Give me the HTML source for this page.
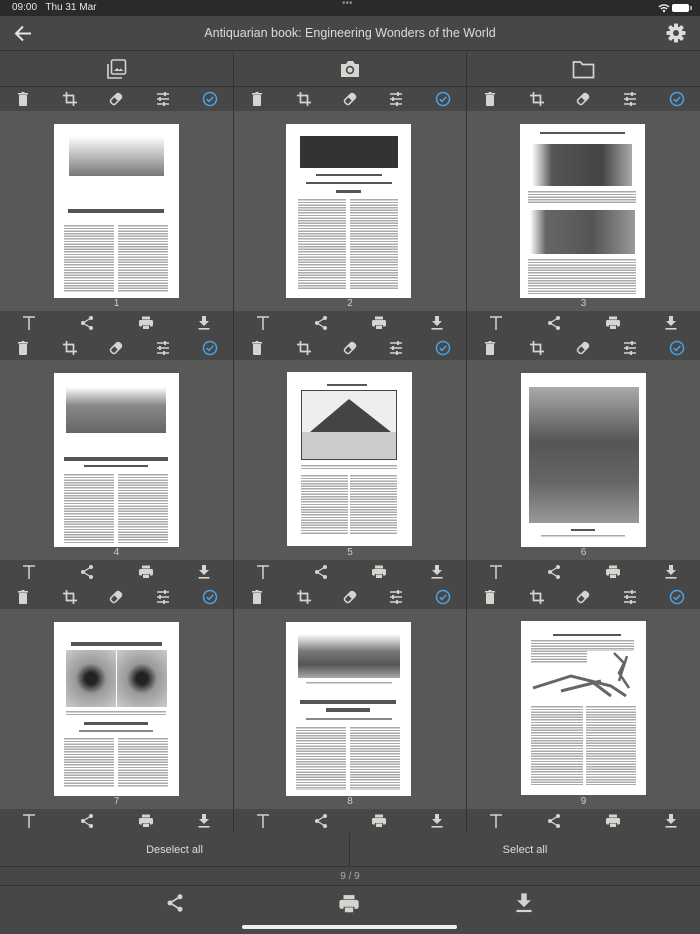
<!DOCTYPE html>
<html><head><meta charset="utf-8"><style>
*{margin:0;padding:0;box-sizing:border-box}
body{width:700px;height:934px;background:#474747;font-family:"Liberation Sans",sans-serif;position:relative;overflow:hidden;color:#d6d4cf}
.abs{position:absolute}
.sb{left:0;top:0;width:700px;height:16px;background:#2a2a2a;font-size:10px;color:#e8e8e8}
.tb{left:0;top:16px;width:700px;height:35px;background:#474747;border-bottom:1px solid #333}
.tabs{left:0;top:52px;width:700px;height:35px;background:#474747;border-bottom:1px solid #333}
.vl{width:1px;background:#333}
.bar{display:flex;justify-content:space-around;align-items:center;height:24px;background:#474747}
.area{height:200px;background:#585858;position:relative}
.cell{position:absolute;width:233px;height:248px;border-bottom:1px solid #333}
.pg{position:absolute;left:54px;top:13px;width:125px;height:174px;background:#fff;overflow:hidden}
.num{position:absolute;left:0;width:100%;top:187px;text-align:center;font-size:10px;color:#ccc}
.pg div{position:absolute}
.im{background:#777}
.tx{background:repeating-linear-gradient(#fff 0 1.2px,#aaa 1.2px 2.6px)}
.hd{background:#555;height:3px}
svg{display:block}
</style></head><body>
<svg width="0" height="0" style="position:absolute">
<defs>
<g id="trash"><rect x="4" y="4" width="8" height="11" rx="1" fill="#d6d4cf"/><rect x="3" y="2" width="10" height="1.6" fill="#d6d4cf"/><rect x="6.5" y="1" width="3" height="1.5" fill="#d6d4cf"/></g>
<g id="crop" fill="none" stroke="#d6d4cf" stroke-width="1.7"><path d="M4.5 1v10.5H15M1 4.5h10.5V15"/></g>
<g id="eras"><g transform="rotate(-45 8 8)"><rect x="2" y="5" width="12" height="6" rx="2" fill="none" stroke="#d6d4cf" stroke-width="1.5"/><rect x="8" y="5" width="6" height="6" rx="1.5" fill="#d6d4cf"/></g></g>
<g id="sld" stroke="#d6d4cf" stroke-width="1.6"><path d="M2 3h12M2 8h12M2 13h12"/><path d="M10 1v4M5 6v4M9 11v4" stroke-width="1.8"/></g>
<g id="chk" fill="none" stroke="#4aa3e3" stroke-width="1.5"><circle cx="8" cy="8" r="6.5"/><path d="M4.8 8.2l2.2 2.2 4.3-4.5"/></g>
<g id="T" stroke="#d6d4cf" stroke-width="1.5" fill="none"><path d="M2 2h12M8 2v13"/></g>
<g id="shr" fill="#d6d4cf"><circle cx="12" cy="3" r="2"/><circle cx="4" cy="8" r="2"/><circle cx="12" cy="13" r="2"/><path d="M12 3L4 8l8 5" stroke="#d6d4cf" stroke-width="1.3" fill="none"/></g>
<g id="prn" fill="#d6d4cf"><rect x="4" y="1.5" width="8" height="3"/><rect x="1" y="5" width="14" height="6.5" rx="1.5"/><rect x="4" y="10" width="8" height="4.5" fill="#474747"/><rect x="5" y="10.5" width="6" height="3.5"/></g>
<g id="dl" fill="#d6d4cf"><path d="M6 1h4v5h3l-5 5-5-5h3z"/><rect x="2.5" y="13" width="11" height="1.6"/></g>
</defs></svg>

<div class="abs sb"><span class="abs" style="left:12px;top:2px">09:00&nbsp;&nbsp;&nbsp;Thu 31 Mar</span>
<span class="abs" style="left:342px;top:-2px;color:#888;font-size:10px">•••</span>
<svg class="abs" style="left:658px;top:3px" width="12" height="10"><path d="M1 4a7 7 0 0 1 10 0M3 6a4 4 0 0 1 6 0" stroke="#eee" stroke-width="1.4" fill="none"/><circle cx="6" cy="8" r="1.2" fill="#eee"/></svg>
<div class="abs" style="left:672px;top:4px;width:17px;height:8px;border-radius:2px;background:#fff"></div><div class="abs" style="left:690px;top:6px;width:1.5px;height:4px;background:#aaa"></div></div>

<div class="abs tb">
<svg class="abs" style="left:14px;top:9px" width="18" height="17"><path d="M17 8.5H2M9 1.5L2 8.5l7 7" stroke="#e4e4e4" stroke-width="2" fill="none"/></svg>
<div class="abs" style="left:0;width:700px;top:10px;text-align:center;font-size:12.5px;color:#dcdcdc">Antiquarian book: Engineering Wonders of the World</div>
<svg class="abs" style="left:666px;top:7px" width="20" height="20" viewBox="0 0 20 20"><g fill="#dcdcdc"><circle cx="10" cy="10" r="6.5"/><g id="tt"><rect x="8" y="0.5" width="4" height="19" rx="1"/></g><use href="#tt" transform="rotate(45 10 10)"/><use href="#tt" transform="rotate(90 10 10)"/><use href="#tt" transform="rotate(135 10 10)"/></g><circle cx="10" cy="10" r="3" fill="#474747"/></svg>
</div>

<div class="abs tabs">
<svg class="abs" style="left:106px;top:7px" width="21" height="21"><rect x="5.5" y="1" width="14" height="14" rx="1.5" fill="none" stroke="#d6d4cf" stroke-width="1.6"/><path d="M2 5v14h14" fill="none" stroke="#d6d4cf" stroke-width="1.6"/><path d="M8 12l3-3 2 2 1.5-1.5 3 2.5z" fill="#d6d4cf"/></svg>
<div class="abs vl" style="left:233px;top:0;height:35px"></div>
<svg class="abs" style="left:339px;top:7px" width="22" height="20"><path d="M2 5h5l2-3h5l2 3h4v13H2z" fill="#d6d4cf"/><circle cx="11" cy="11" r="4.2" fill="#474747"/><circle cx="11" cy="11" r="2.6" fill="#d6d4cf"/></svg>
<div class="abs vl" style="left:466px;top:0;height:35px"></div>
<svg class="abs" style="left:572px;top:8px" width="23" height="19"><path d="M1.5 2h7l2 2.5h11v13h-20z" fill="none" stroke="#d6d4cf" stroke-width="1.7"/></svg>
</div>

<div class="abs vl" style="left:233px;top:87px;height:745px"></div>
<div class="abs vl" style="left:466px;top:87px;height:745px"></div>

<!-- cell template repeated -->
<div id="grid">
</div>

<div class="cell" style="left:0;top:87px"><div class="bar"><svg width="16" height="16"><use href="#trash"/></svg><svg width="16" height="16"><use href="#crop"/></svg><svg width="16" height="16"><use href="#eras"/></svg><svg width="16" height="16"><use href="#sld"/></svg><svg width="16" height="16"><use href="#chk"/></svg></div><div class="area"><div class="pg">
<div class="im" style="left:15px;top:12px;width:95px;height:40px;background:linear-gradient(#fff,#bbb 50%,#777)"></div>
<div class="hd" style="left:14px;top:85px;width:96px;height:4px"></div>
<div class="tx" style="left:10px;top:100px;width:50px;height:68px"></div><div class="tx" style="left:64px;top:100px;width:50px;height:68px"></div></div><div class="num">1</div></div>
<div class="bar"><svg width="16" height="16"><use href="#T"/></svg><svg width="16" height="16"><use href="#shr"/></svg><svg width="16" height="16"><use href="#prn"/></svg><svg width="16" height="16"><use href="#dl"/></svg></div></div>

<div class="cell" style="left:234px;top:87px;width:232px"><div class="bar"><svg width="16" height="16"><use href="#trash"/></svg><svg width="16" height="16"><use href="#crop"/></svg><svg width="16" height="16"><use href="#eras"/></svg><svg width="16" height="16"><use href="#sld"/></svg><svg width="16" height="16"><use href="#chk"/></svg></div><div class="area"><div class="pg" style="left:52px">
<div class="im" style="left:14px;top:12px;width:98px;height:32px;background:#333"></div>
<div class="hd" style="left:30px;top:50px;width:66px;height:2px"></div><div class="hd" style="left:20px;top:58px;width:86px;height:2px"></div><div class="hd" style="left:50px;top:66px;width:25px;height:3px"></div>
<div class="tx" style="left:12px;top:74px;width:48px;height:92px"></div><div class="tx" style="left:64px;top:74px;width:48px;height:92px"></div></div><div class="num">2</div></div>
<div class="bar"><svg width="16" height="16"><use href="#T"/></svg><svg width="16" height="16"><use href="#shr"/></svg><svg width="16" height="16"><use href="#prn"/></svg><svg width="16" height="16"><use href="#dl"/></svg></div></div>

<div class="cell" style="left:467px;top:87px"><div class="bar"><svg width="16" height="16"><use href="#trash"/></svg><svg width="16" height="16"><use href="#crop"/></svg><svg width="16" height="16"><use href="#eras"/></svg><svg width="16" height="16"><use href="#sld"/></svg><svg width="16" height="16"><use href="#chk"/></svg></div><div class="area"><div class="pg" style="left:53px">
<div class="hd" style="left:20px;top:8px;width:85px;height:2px"></div>
<div class="im" style="left:12px;top:20px;width:100px;height:42px;background:linear-gradient(90deg,#fff,#555 20%,#444 70%,#aaa)"></div>
<div class="tx" style="left:8px;top:66px;width:108px;height:14px"></div>
<div class="im" style="left:10px;top:86px;width:105px;height:44px;background:linear-gradient(90deg,#fff,#666 15%,#555 60%,#999)"></div>
<div class="tx" style="left:8px;top:134px;width:108px;height:36px"></div></div><div class="num">3</div></div>
<div class="bar"><svg width="16" height="16"><use href="#T"/></svg><svg width="16" height="16"><use href="#shr"/></svg><svg width="16" height="16"><use href="#prn"/></svg><svg width="16" height="16"><use href="#dl"/></svg></div></div>

<div class="cell" style="left:0;top:336px"><div class="bar"><svg width="16" height="16"><use href="#trash"/></svg><svg width="16" height="16"><use href="#crop"/></svg><svg width="16" height="16"><use href="#eras"/></svg><svg width="16" height="16"><use href="#sld"/></svg><svg width="16" height="16"><use href="#chk"/></svg></div><div class="area"><div class="pg">
<div class="im" style="left:12px;top:14px;width:100px;height:46px;background:linear-gradient(#fff,#888 40%,#666)"></div>
<div class="hd" style="left:10px;top:84px;width:104px;height:4px"></div><div class="hd" style="left:30px;top:92px;width:64px;height:2px"></div>
<div class="tx" style="left:10px;top:100px;width:50px;height:70px"></div><div class="tx" style="left:64px;top:100px;width:50px;height:70px"></div></div><div class="num">4</div></div>
<div class="bar"><svg width="16" height="16"><use href="#T"/></svg><svg width="16" height="16"><use href="#shr"/></svg><svg width="16" height="16"><use href="#prn"/></svg><svg width="16" height="16"><use href="#dl"/></svg></div></div>

<div class="cell" style="left:234px;top:336px;width:232px"><div class="bar"><svg width="16" height="16"><use href="#trash"/></svg><svg width="16" height="16"><use href="#crop"/></svg><svg width="16" height="16"><use href="#eras"/></svg><svg width="16" height="16"><use href="#sld"/></svg><svg width="16" height="16"><use href="#chk"/></svg></div><div class="area"><div class="pg" style="left:53px;top:12px">
<div class="hd" style="left:40px;top:12px;width:40px;height:1.5px"></div>
<div class="im" style="left:14px;top:18px;width:96px;height:70px;background:#eee;border:1px solid #444"></div>
<svg style="position:absolute;left:20px;top:25px" width="84" height="35"><path d="M3 35L42 2 84 35z" fill="#444"/></svg>
<div class="im" style="left:15px;top:60px;width:94px;height:27px;background:#ccc"></div>
<div class="tx" style="left:14px;top:92px;width:96px;height:5px"></div>
<div class="tx" style="left:14px;top:102px;width:47px;height:60px"></div><div class="tx" style="left:63px;top:102px;width:47px;height:60px"></div></div><div class="num">5</div></div>
<div class="bar"><svg width="16" height="16"><use href="#T"/></svg><svg width="16" height="16"><use href="#shr"/></svg><svg width="16" height="16"><use href="#prn"/></svg><svg width="16" height="16"><use href="#dl"/></svg></div></div>

<div class="cell" style="left:467px;top:336px"><div class="bar"><svg width="16" height="16"><use href="#trash"/></svg><svg width="16" height="16"><use href="#crop"/></svg><svg width="16" height="16"><use href="#eras"/></svg><svg width="16" height="16"><use href="#sld"/></svg><svg width="16" height="16"><use href="#chk"/></svg></div><div class="area"><div class="pg" style="left:54px">
<div class="im" style="left:8px;top:14px;width:110px;height:136px;background:linear-gradient(#aaa,#555 40%,#666 70%,#999)"></div>
<div class="hd" style="left:50px;top:156px;width:24px;height:2px"></div><div class="tx" style="left:20px;top:161px;width:84px;height:4px"></div></div><div class="num">6</div></div>
<div class="bar"><svg width="16" height="16"><use href="#T"/></svg><svg width="16" height="16"><use href="#shr"/></svg><svg width="16" height="16"><use href="#prn"/></svg><svg width="16" height="16"><use href="#dl"/></svg></div></div>

<div class="cell" style="left:0;top:585px"><div class="bar"><svg width="16" height="16"><use href="#trash"/></svg><svg width="16" height="16"><use href="#crop"/></svg><svg width="16" height="16"><use href="#eras"/></svg><svg width="16" height="16"><use href="#sld"/></svg><svg width="16" height="16"><use href="#chk"/></svg></div><div class="area"><div class="pg">
<div class="hd" style="left:17px;top:20px;width:91px;height:4px"></div>
<div class="im" style="left:12px;top:28px;width:50px;height:57px;background:radial-gradient(circle at 50% 50%,#222 15%,#999 40%,#ccc)"></div>
<div class="im" style="left:63px;top:28px;width:50px;height:57px;background:radial-gradient(circle at 50% 50%,#222 15%,#999 40%,#ccc)"></div>
<div class="tx" style="left:12px;top:88px;width:100px;height:6px"></div>
<div class="hd" style="left:30px;top:100px;width:64px;height:3px"></div><div class="hd" style="left:25px;top:108px;width:74px;height:2px;background:#888"></div>
<div class="tx" style="left:10px;top:115px;width:50px;height:50px"></div><div class="tx" style="left:64px;top:115px;width:50px;height:50px"></div></div><div class="num">7</div></div>
<div class="bar"><svg width="16" height="16"><use href="#T"/></svg><svg width="16" height="16"><use href="#shr"/></svg><svg width="16" height="16"><use href="#prn"/></svg><svg width="16" height="16"><use href="#dl"/></svg></div></div>

<div class="cell" style="left:234px;top:585px;width:232px"><div class="bar"><svg width="16" height="16"><use href="#trash"/></svg><svg width="16" height="16"><use href="#crop"/></svg><svg width="16" height="16"><use href="#eras"/></svg><svg width="16" height="16"><use href="#sld"/></svg><svg width="16" height="16"><use href="#chk"/></svg></div><div class="area"><div class="pg" style="left:52px">
<div class="im" style="left:12px;top:12px;width:102px;height:44px;background:linear-gradient(#fff,#777 40%,#555 70%,#aaa)"></div>
<div class="tx" style="left:20px;top:59px;width:86px;height:4px"></div>
<div class="hd" style="left:14px;top:78px;width:96px;height:4px"></div><div class="hd" style="left:40px;top:86px;width:44px;height:4px"></div>
<div class="hd" style="left:20px;top:96px;width:86px;height:2px;background:#888"></div>
<div class="tx" style="left:10px;top:104px;width:50px;height:64px"></div><div class="tx" style="left:64px;top:104px;width:50px;height:64px"></div></div><div class="num">8</div></div>
<div class="bar"><svg width="16" height="16"><use href="#T"/></svg><svg width="16" height="16"><use href="#shr"/></svg><svg width="16" height="16"><use href="#prn"/></svg><svg width="16" height="16"><use href="#dl"/></svg></div></div>

<div class="cell" style="left:467px;top:585px"><div class="bar"><svg width="16" height="16"><use href="#trash"/></svg><svg width="16" height="16"><use href="#crop"/></svg><svg width="16" height="16"><use href="#eras"/></svg><svg width="16" height="16"><use href="#sld"/></svg><svg width="16" height="16"><use href="#chk"/></svg></div><div class="area"><div class="pg" style="left:54px;top:12px">
<div class="hd" style="left:32px;top:13px;width:68px;height:2px"></div>
<div class="tx" style="left:10px;top:18px;width:56px;height:24px"></div><div class="tx" style="left:63px;top:18px;width:50px;height:12px"></div>
<svg style="position:absolute;left:10px;top:45px" width="105" height="35"><path d="M2 22L40 10 80 20 95 30M30 25l40-10M60 15l20 15" stroke="#666" stroke-width="3" fill="none"/></svg>
<svg style="position:absolute;left:88px;top:30px" width="25" height="40"><path d="M5 2l10 10-5 10 10 15M18 5l-8 25" stroke="#666" stroke-width="2.5" fill="none"/></svg>
<div class="tx" style="left:10px;top:84px;width:52px;height:80px"></div><div class="tx" style="left:65px;top:84px;width:50px;height:80px"></div></div><div class="num">9</div></div>
<div class="bar"><svg width="16" height="16"><use href="#T"/></svg><svg width="16" height="16"><use href="#shr"/></svg><svg width="16" height="16"><use href="#prn"/></svg><svg width="16" height="16"><use href="#dl"/></svg></div></div>

<div class="abs" style="left:0;top:833px;width:700px;height:34px;background:#474747;border-bottom:1px solid #333;font-size:11px;color:#ddd">
<div class="abs" style="left:0;width:349px;top:11px;text-align:center">Deselect all</div>
<div class="abs vl" style="left:349px;top:0;height:34px"></div>
<div class="abs" style="left:350px;width:350px;top:11px;text-align:center">Select all</div></div>
<div class="abs" style="left:0;top:868px;width:700px;height:18px;border-bottom:1px solid #333;font-size:10px;color:#aaa;text-align:center;line-height:17px">9 / 9</div>
<svg class="abs" style="left:165px;top:893px" width="20" height="20" viewBox="0 0 16 16"><use href="#shr"/></svg>
<svg class="abs" style="left:338px;top:893px" width="22" height="22" viewBox="0 0 16 16"><use href="#prn"/></svg>
<svg class="abs" style="left:513px;top:892px" width="22" height="22" viewBox="0 0 16 16"><use href="#dl"/></svg>
<div class="abs" style="left:242px;top:925px;width:215px;height:4px;border-radius:2px;background:#f0f0f0"></div>
</body></html>
